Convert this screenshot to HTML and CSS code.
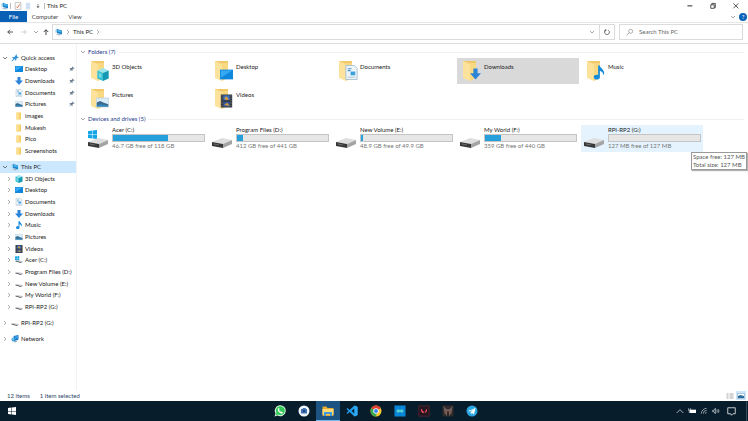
FILE: index.html
```html
<!DOCTYPE html>
<html lang="en">

<head>
    <meta charset="UTF-8">
    <meta name="viewport" content="width=device-width, initial-scale=1.0">
    <title>This PC</title>
    <link rel="stylesheet" href="styles.css">
</head>

<body>
    <!-- icon sprite -->
    <svg class="sprite" aria-hidden="true">
        <symbol id="pc" viewBox="0 0 16 16">
            <path d="M1 3l4-2v7l-4 2z" fill="#9ccbe6"/>
            <path d="M4 2l10 3v8L4 10z" fill="#1683cf"/>
            <path d="M5 3l8 3v3L5 7z" fill="#4db4ec"/>
            <path d="M1 12l6-1 6 3-5 1z" fill="#a9bac6"/>
        </symbol>
        <symbol id="chev-r" viewBox="0 0 8 8"><path d="M2 0l4 4-4 4" fill="none" stroke="currentColor" stroke-width="1.2"/></symbol>
        <symbol id="chev-d" viewBox="0 0 8 8"><path d="M0 2l4 4 4-4" fill="none" stroke="currentColor" stroke-width="1.3"/></symbol>
        <symbol id="arrow" viewBox="0 0 8 8"><path d="M8 4H1M4 1L1 4l3 3" fill="none" stroke="currentColor" stroke-width="1"/></symbol>
        <symbol id="arrow-up" viewBox="0 0 8 8"><path d="M4 8V1M1 4l3-3 3 3" fill="none" stroke="currentColor" stroke-width="1.1"/></symbol>
        <symbol id="star" viewBox="0 0 16 16"><path d="M11 0l1 5 4 2-5 2-1 5-3-4-5 5-1-1 4-5-4-2 6-1z" fill="#2f92dd"/></symbol>
        <symbol id="pin" viewBox="0 0 12 12"><path d="M7 1l4 4-1 1-1-1-2 2 0 3-1 0-2-2-3 3 0-1 2-3-2-2 1-1 3 0 2-2-1-1z" fill="#6d7f91"/></symbol>
        <symbol id="desktop" viewBox="0 0 16 16">
            <path d="M0 2h16v12H0z" fill="#0f87dc"/>
            <path d="M1 3h14L1 12z" fill="#35a9f4"/>
        </symbol>
        <symbol id="download" viewBox="0 0 16 16"><path d="M5 0h6v7h5l-8 9-8-9h5z" fill="#2c84d8"/></symbol>
        <symbol id="document" viewBox="0 0 16 16">
            <path d="M2 .5h9l3 3v12H2z" fill="#edf5fa" stroke="#a9bfce"/>
            <path d="M4 4h4M4 6h3" stroke="#4a93c9" stroke-width="1.2"/>
            <path d="M7 7h5v4H7z" fill="#3fa0dd"/>
            <path d="M4 13h8" stroke="#a5c0d2"/>
        </symbol>
        <symbol id="picture" viewBox="0 0 16 16">
            <path d="M.5 2.5h15v11H.5z" fill="#d9edf9" stroke="#c0d0db"/>
            <path d="M1 8l4-2 4 2 6 2v3H1z" fill="#3c698c"/>
            <path d="M1 11l6-1 8 2v1H1z" fill="#2e88bf"/>
        </symbol>
        <symbol id="video" viewBox="0 0 16 16">
            <path d="M1 0h14v16H1z" fill="#33363f"/>
            <path d="M4 1h8v6H4z" fill="#3c6fbd"/>
            <path d="M4 9h8v6H4z" fill="#375992"/>
            <path d="M5 5l3-3 3 4-3 1zM5 13l4-3 3 4z" fill="#cf9c43"/>
            <path d="M2.500 1v14M13.500 1v14" stroke="#868c96" stroke-dasharray="1.500 1.500"/>
        </symbol>
        <symbol id="music" viewBox="0 0 16 16">
            <path d="M7 0h2c0 3 5 4 5 9l-1 2c0-3-2-4-4-5v7c0 4-7 4-7 0 0-2 3-3 5-2z" fill="#148cdd"/>
        </symbol>
        <symbol id="cube" viewBox="0 0 16 16">
            <path d="M1 3l7-3 7 3-7 3z" fill="#9be6ee"/>
            <path d="M1 3l7 3v10l-7-3z" fill="#38bfd2"/>
            <path d="M15 3L8 6v10l7-3z" fill="#1598b4"/>
            <path d="M3 6l3 1v5l-3-1z" fill="#79dbe5"/>
        </symbol>
        <symbol id="folder-sm" viewBox="0 0 16 16">
            <path d="M3 1h9v14H3z" fill="#f4cc62"/>
            <path d="M3 1l6 2v12H3z" fill="#fbdf8c"/>
        </symbol>
        <symbol id="folder" viewBox="0 0 20 22">
            <path d="M1 1h13v17H4z" fill="#f0c868"/>
            <path d="M1 1l7 3v17l-7-3z" fill="#fce29a"/>
            <path d="M8 3h6v15l-6 3z" fill="#f8d880"/>
        </symbol>
        <symbol id="drive" viewBox="0 0 22 12">
            <path d="M1 6L11 2l10 2-9 4z" fill="#dedede"/>
            <path d="M1 6l11 2v4L1 10z" fill="#383838"/>
            <path d="M12 8l9-4v4l-9 4z" fill="#a4a4a4"/>
            <path d="M3 8l5 1" stroke="#6c6c6c"/>
        </symbol>
        <symbol id="drive-sm" viewBox="0 0 16 16">
            <path d="M1 9l5-1 9 2-3 2z" fill="#d3d6d8"/>
            <path d="M1 9l11 3v2L1 11z" fill="#5b5f64"/>
            <path d="M12 12l3-2v2l-3 2z" fill="#8a8e92"/>
        </symbol>
        <symbol id="winflag" viewBox="0 0 16 16">
            <path d="M0 2l7-1v7H0zM8 1l8-1v8H8zM0 9h7v6l-7-1zM8 9h8v7l-8-1z" fill="currentColor"/>
        </symbol>
        <symbol id="network" viewBox="0 0 16 16">
            <path d="M5 2l10-2v9l-8 3z" fill="#1676c4"/>
            <path d="M7 3l7-2v5l-6 2z" fill="#3a9de2"/>
            <circle cx="5" cy="9" r="4" fill="#2b8fd0"/>
            <path d="M2 8l3-2 2 2-3 4z" fill="#7cc8ee"/>
            <path d="M7 12l6-1-2 3-5 1z" fill="#82a6bb"/>
        </symbol>
    </svg>

    <header>
        <div class="titlebar">
            <svg class="i8"><use href="#pc"/></svg>
            <span class="sep"></span>
            <button class="quick" aria-label="Properties"><svg viewBox="0 0 12 14"><path d="M1 1h10v12H1z" fill="#fff" stroke="#9b9b9b"/><path d="M3 8l2 2 4-6" fill="none" stroke="#d9572b" stroke-width="1.500"/></svg></button>
            <button class="quick" aria-label="New folder"><svg viewBox="0 0 12 14"><path d="M2 1h8v12H2z" fill="#dceaf7"/><path d="M3 4h6M3 7h6M3 10h6" stroke="#b2cde7"/></svg></button>
            <button class="quick" aria-label="Customize toolbar"><svg viewBox="0 0 12 14"><path d="M4 5h4M4 8h4l-2 2z" stroke="#555" fill="#555"/></svg></button>
            <span class="sep"></span>
            <h1>This PC</h1>
            <div class="window-buttons">
                <button aria-label="Minimize"><svg viewBox="0 0 10 10"><path d="M2 5.500h7" stroke="#333" stroke-width="1.500"/></svg></button>
                <button aria-label="Restore"><svg viewBox="0 0 10 10"><path d="M2.500 4h5v5h-5zM4 4V2h5v6H8" fill="none" stroke="#333" stroke-width="1.200"/></svg></button>
                <button aria-label="Close"><svg viewBox="0 0 10 10"><path d="M2 2l7 7M9 2L2 9" stroke="#333" stroke-width="1.200"/></svg></button>
            </div>
        </div>
        <div class="ribbon">
            <button class="file">File</button>
            <button>Computer</button>
            <button>View</button>
            <div class="ribbon-end">
                <button class="expand" aria-label="Expand ribbon"><svg class="i4"><use href="#chev-d"/></svg></button>
                <button class="help" aria-label="Help">?</button>
            </div>
        </div>
        <nav class="navbar">
            <button aria-label="Back"><svg class="i6"><use href="#arrow"/></svg></button>
            <button class="forward" aria-label="Forward"><svg class="i6"><use href="#arrow"/></svg></button>
            <button class="recent" aria-label="Recent"><svg class="i4"><use href="#chev-d"/></svg></button>
            <button class="up" aria-label="Up"><svg class="i6"><use href="#arrow-up"/></svg></button>
            <div class="address">
                <svg class="i8"><use href="#pc"/></svg>
                <svg class="i4"><use href="#chev-r"/></svg>
                <a href="#">This PC</a>
                <svg class="i4"><use href="#chev-r"/></svg>
                <button class="drop" aria-label="Previous locations"><svg class="i4"><use href="#chev-d"/></svg></button>
                <button class="refresh" aria-label="Refresh"><svg class="i6" viewBox="0 0 10 10"><path d="M7 2a4 4 0 1 1-4 0M3 0v3H0" fill="none" stroke="#444" stroke-width="1.200"/></svg></button>
            </div>
            <label class="search">
                <svg class="i8" viewBox="0 0 12 12"><circle cx="7" cy="5" r="3" fill="none" stroke="#888"/><path d="M5 7l-4 4" stroke="#888"/></svg>
                <input type="search" placeholder="Search This PC" aria-label="Search This PC">
            </label>
        </nav>
    </header>

    <div class="content">
        <aside>
            <ul class="quick-access">
                <li class="root"><svg class="i4 open"><use href="#chev-d"/></svg><svg class="i8"><use href="#star"/></svg><a href="#">Quick access</a></li>
                <li><svg class="i8"><use href="#desktop"/></svg><a href="#">Desktop</a><svg class="pin"><use href="#pin"/></svg></li>
                <li><svg class="i8"><use href="#download"/></svg><a href="#">Downloads</a><svg class="pin"><use href="#pin"/></svg></li>
                <li><svg class="i8"><use href="#document"/></svg><a href="#">Documents</a><svg class="pin"><use href="#pin"/></svg></li>
                <li><svg class="i8"><use href="#picture"/></svg><a href="#">Pictures</a><svg class="pin"><use href="#pin"/></svg></li>
                <li><svg class="i8"><use href="#folder-sm"/></svg><a href="#">images</a></li>
                <li><svg class="i8"><use href="#folder-sm"/></svg><a href="#">Mukesh</a></li>
                <li><svg class="i8"><use href="#folder-sm"/></svg><a href="#">Pico</a></li>
                <li><svg class="i8"><use href="#folder-sm"/></svg><a href="#">Screenshots</a></li>
            </ul>
            <ul class="this-pc">
                <li class="root active"><svg class="i4 open"><use href="#chev-d"/></svg><svg class="i8"><use href="#pc"/></svg><a href="#">This PC</a></li>
                <li><svg class="i4"><use href="#chev-r"/></svg><svg class="i8"><use href="#cube"/></svg><a href="#">3D Objects</a></li>
                <li><svg class="i4"><use href="#chev-r"/></svg><svg class="i8"><use href="#desktop"/></svg><a href="#">Desktop</a></li>
                <li><svg class="i4"><use href="#chev-r"/></svg><svg class="i8"><use href="#document"/></svg><a href="#">Documents</a></li>
                <li><svg class="i4"><use href="#chev-r"/></svg><svg class="i8"><use href="#download"/></svg><a href="#">Downloads</a></li>
                <li><svg class="i4"><use href="#chev-r"/></svg><svg class="i8"><use href="#music"/></svg><a href="#">Music</a></li>
                <li><svg class="i4"><use href="#chev-r"/></svg><svg class="i8"><use href="#picture"/></svg><a href="#">Pictures</a></li>
                <li><svg class="i4"><use href="#chev-r"/></svg><svg class="i8"><use href="#video"/></svg><a href="#">Videos</a></li>
                <li><svg class="i4"><use href="#chev-r"/></svg><svg class="i8 blue" viewBox="0 0 16 16"><use href="#drive-sm"/><use href="#winflag" width="9" height="9"/></svg><a href="#">Acer (C:)</a></li>
                <li><svg class="i4"><use href="#chev-r"/></svg><svg class="i8"><use href="#drive-sm"/></svg><a href="#">Program Files (D:)</a></li>
                <li><svg class="i4"><use href="#chev-r"/></svg><svg class="i8"><use href="#drive-sm"/></svg><a href="#">New Volume (E:)</a></li>
                <li><svg class="i4"><use href="#chev-r"/></svg><svg class="i8"><use href="#drive-sm"/></svg><a href="#">My World (F:)</a></li>
                <li><svg class="i4"><use href="#chev-r"/></svg><svg class="i8"><use href="#drive-sm"/></svg><a href="#">RPI-RP2 (G:)</a></li>
            </ul>
            <ul>
                <li class="root"><svg class="i4"><use href="#chev-r"/></svg><svg class="i8"><use href="#drive-sm"/></svg><a href="#">RPI-RP2 (G:)</a></li>
            </ul>
            <ul>
                <li class="root"><svg class="i4"><use href="#chev-r"/></svg><svg class="i8"><use href="#network"/></svg><a href="#">Network</a></li>
            </ul>
        </aside>

        <main>
            <h2><svg class="i4"><use href="#chev-d"/></svg>Folders (7)</h2>
            <div class="tiles">
                <a class="tile" href="#"><svg class="thumb" viewBox="0 0 20 22"><use href="#folder"/><use href="#cube" x="6" y="8" width="14" height="13"/></svg><span>3D Objects</span></a>
                <a class="tile" href="#"><svg class="thumb" viewBox="0 0 20 22"><use href="#folder"/><use href="#desktop" x="6" y="8" width="13" height="13"/></svg><span>Desktop</span></a>
                <a class="tile" href="#"><svg class="thumb" viewBox="0 0 20 22"><use href="#folder"/><use href="#document" x="6" y="5" width="15" height="15"/></svg><span>Documents</span></a>
                <a class="tile selected" href="#"><svg class="thumb" viewBox="0 0 20 22"><use href="#folder"/><use href="#download" x="8" y="8" width="11" height="12"/></svg><span>Downloads</span></a>
                <a class="tile" href="#"><svg class="thumb" viewBox="0 0 20 22"><use href="#folder"/><use href="#music" x="6" y="4" width="14" height="17"/></svg><span>Music</span></a>
                <a class="tile" href="#"><svg class="thumb" viewBox="0 0 20 22"><use href="#folder"/><use href="#picture" x="6" y="8" width="13" height="13"/></svg><span>Pictures</span></a>
                <a class="tile" href="#"><svg class="thumb" viewBox="0 0 20 22"><use href="#folder"/><use href="#video" x="6" y="6" width="13" height="14"/></svg><span>Videos</span></a>
            </div>

            <h2><svg class="i4"><use href="#chev-d"/></svg>Devices and drives (5)</h2>
            <div class="tiles">
                <a class="tile drive" href="#"><svg class="thumb blue" viewBox="0 0 22 22"><use href="#winflag" x="1" y="4" width="9" height="9"/><use href="#drive" y="10" width="22" height="12"/></svg>
                    <div class="info"><span>Acer (C:)</span><div class="bar"><div style="width: 60%"></div></div><small>46.7 GB free of 118 GB</small></div></a>
                <a class="tile drive" href="#"><svg class="thumb" viewBox="0 0 22 22"><use href="#drive" y="10" width="22" height="12"/></svg>
                    <div class="info"><span>Program Files (D:)</span><div class="bar"><div style="width: 7%"></div></div><small>412 GB free of 441 GB</small></div></a>
                <a class="tile drive" href="#"><svg class="thumb" viewBox="0 0 22 22"><use href="#drive" y="10" width="22" height="12"/></svg>
                    <div class="info"><span>New Volume (E:)</span><div class="bar"><div style="width: 2%"></div></div><small>48.9 GB free of 49.9 GB</small></div></a>
                <a class="tile drive" href="#"><svg class="thumb" viewBox="0 0 22 22"><use href="#drive" y="10" width="22" height="12"/></svg>
                    <div class="info"><span>My World (F:)</span><div class="bar"><div style="width: 18%"></div></div><small>359 GB free of 440 GB</small></div></a>
                <a class="tile drive hovered" href="#"><svg class="thumb" viewBox="0 0 22 22"><use href="#drive" y="10" width="22" height="12"/></svg>
                    <div class="info"><span>RPI-RP2 (G:)</span><div class="bar"><div style="width: 0%"></div></div><small>127 MB free of 127 MB</small></div>
                    <div class="tooltip" role="tooltip">Space free: 127 MB<br>Total size: 127 MB</div></a>
            </div>
        </main>
    </div>

    <footer class="status">
        <span>12 items</span>
        <span>1 item selected</span>
        <div class="views">
            <button aria-label="Details view"><svg viewBox="0 0 16 12"><path d="M1 2h4M1 6h4M1 10h4M7 2h8M7 6h8M7 10h8" stroke="#8d8d8d" stroke-width="1.500"/></svg></button>
            <button class="on" aria-label="Large icons view"><svg viewBox="0 0 16 12"><path d="M1 1h14v10H1z" fill="#fff" stroke="#7795aa"/><path d="M2 6l5-2 7 2v4H2z" fill="#2b6d9c"/></svg></button>
        </div>
    </footer>

    <div class="taskbar">
        <button class="start" aria-label="Start"><svg viewBox="0 0 16 16"><use href="#winflag"/></svg></button>
        <div class="apps">
            <button aria-label="WhatsApp"><svg viewBox="0 0 24 24"><path d="M1 23l2-6a11 11 0 1 1 4 4z" fill="#d9f7e0"/><path d="M3 21l2-5a9 9 0 1 1 3 3z" fill="#36c75a"/><path d="M8 7l2-1 1 3-1 2 4 3 1-1 3 2c-1 3-4 3-7 0-3-2-4-5-3-8z" fill="#fff"/></svg></button>
            <button aria-label="Camera"><svg viewBox="0 0 24 24"><circle cx="12" cy="12" r="11" fill="#f3f6f9"/><path d="M6 8h3l1-2h5l1 2h2v9H6z" fill="#3d70b2"/><circle cx="12" cy="12" r="2" fill="#183b68"/></svg></button>
            <button class="running" aria-label="File Explorer"><svg viewBox="0 0 24 24"><path d="M1 3h8l2 3h12v16H1z" fill="#e6aa35"/><path d="M1 8h22v11H1z" fill="#ffdc78"/><path d="M4 14h16v8h-4v-4H8v4H4z" fill="#3d98dc"/></svg></button>
            <button aria-label="Visual Studio Code"><svg viewBox="0 0 24 24"><path d="M17 1l6 3v16l-6 3L7 14l-4 4-2-2 4-4-4-4 2-2 4 4zM17 7l-6 5 6 5z" fill="#229cec" fill-rule="evenodd"/><path d="M17 1l6 3v16l-6 3z" fill="#2fabf5"/></svg></button>
            <button aria-label="Chrome"><svg viewBox="0 0 24 24"><circle cx="12" cy="12" r="11" fill="#fbc72f"/><path d="M12 12L2.500 6.500a11 11 0 0 1 19 0z" fill="#e34133"/><path d="M2.500 6.500A11 11 0 0 0 11 23l4-8-3-3z" fill="#35a853"/><circle cx="12" cy="12" r="5.500" fill="#fff"/><circle cx="12" cy="12" r="4" fill="#3d82ef"/></svg></button>
            <button aria-label="Arduino"><svg viewBox="0 0 24 24"><path d="M1 1h22v22H1z" fill="#0a86d8"/><path d="M12 12c-3-4-6-2-6 0s3 4 6 0c3-4 6-2 6 0s-3 4-6 0z" fill="#47c9bd" stroke="#7fe8d6" stroke-width="1.500"/></svg></button>
            <button aria-label="Valorant"><svg viewBox="0 0 24 24"><path d="M1.500 1.500h21v21h-21z" fill="#251722" stroke="#7c2835"/><path d="M6 7l7 9h-4l-3-4zM18 7v5l-2 3h-3z" fill="#f34d5d"/></svg></button>
            <button aria-label="Predator"><svg viewBox="0 0 24 24"><path d="M1 1h22v22H1z" fill="#332b2b"/><path d="M3 2l4 5 5 2 5-2 4-5-2 14-5 6v-9h-4v9l-5-6z" fill="#6d6461"/><path d="M6 11l5 2-3 2zM18 11l-5 2 3 2z" fill="#a9422d"/></svg></button>
            <button aria-label="Telegram"><svg viewBox="0 0 24 24"><circle cx="12" cy="12" r="11" fill="#2ba5df"/><path d="M4 12l15-6-3 13-4-3-2 2-1-4 7-6-9 5z" fill="#fff"/></svg></button>
        </div>
        <div class="tray">
            <button aria-label="Show hidden icons"><svg viewBox="0 0 12 12"><path d="M1 9l5-5 5 5" fill="none" stroke="#fff"/></svg></button>
            <button aria-label="Battery"><svg viewBox="0 0 12 12"><path d="M3 4h9v5H3z" fill="#fff"/><path d="M1 2v3h3V2M2 5v4" stroke="#fff" fill="none"/></svg></button>
            <button aria-label="Wi-Fi"><svg viewBox="0 0 12 12"><path d="M2 10a8 8 0 0 1 8-8M5 10a5 5 0 0 1 5-5M8 10a2 2 0 0 1 2-2" fill="none" stroke="#ced5da"/></svg></button>
            <button aria-label="Volume"><svg viewBox="0 0 12 12"><path d="M1 5h2l2-3v8L3 7H1zM7 4q2 2 0 4M9 3q3 3 0 6" fill="none" stroke="#dfe4e8"/></svg></button>
            <button class="notify" aria-label="Notifications"><svg viewBox="0 0 12 12"><path d="M1 1h10v8H8l-2 2-1-2H1z" fill="none" stroke="#fff"/></svg></button>
        </div>
    </div>
</body>

</html>
```

FILE: styles.css
```css
* {
    box-sizing: border-box;
}

body {
    font-family: Lato, 'Open Sans', sans-serif;
    font-size: 6px;
    line-height: 8px;
    color: #222;
    background-color: #fff;
    display: flex;
    flex-direction: column;
    min-height: 100vh;
    margin: 0;
}

.sprite {
    display: none;
}

svg {
    display: block;
    flex: none;
}

button {
    font: inherit;
    color: inherit;
    background: none;
    border: none;
    padding: 0;
    display: flex;
    align-items: center;
    justify-content: center;
}

a {
    color: inherit;
    text-decoration: none;
}

h1, h2 {
    font-size: 6px;
    font-weight: normal;
    margin: 0;
}

.i4 {
    width: 4px;
    height: 4px;
    color: #777;
}

.i6 {
    width: 6px;
    height: 6px;
}

.i8 {
    width: 8px;
    height: 8px;
}

.blue {
    color: #12a5e8;
}

/* title bar */
.titlebar {
    display: flex;
    align-items: center;
    height: 11px;
    padding-left: 1px;
}

.titlebar .sep {
    width: 1px;
    height: 6px;
    margin: 0 2px 0 1px;
    background-color: #bbb;
}

.quick {
    width: 10px;
}

.quick svg {
    width: 8px;
    height: 8px;
}

.window-buttons {
    display: flex;
    margin-left: auto;
    padding-right: 1px;
}

.window-buttons button {
    width: 23px;
    height: 11px;
}

.window-buttons svg {
    width: 7px;
    height: 7px;
}

/* ribbon */
.ribbon {
    display: flex;
    height: 12px;
    border-bottom: 1px solid #e6e6e6;
}

.ribbon > button {
    width: 30px;
    color: #444;
}

.ribbon > .file {
    width: 27px;
    margin-right: 3px;
    color: #fff;
    background-color: #0a60b4;
}

.ribbon-end {
    display: flex;
    align-items: center;
    gap: 4px;
    margin-left: auto;
    padding-right: 1px;
}

.help {
    width: 8px;
    height: 8px;
    border-radius: 50%;
    color: #fff;
    background-color: #0a63b8;
}

/* navigation row */
.navbar {
    display: flex;
    align-items: center;
    height: 21px;
    padding: 0 5px 2px 3px;
    border-bottom: 1px solid #dedede;
}

.navbar > button {
    width: 14px;
}

.navbar .forward {
    color: #c4c4c4;
}

.forward svg {
    transform: rotate(180deg);
}

.navbar > .recent {
    width: 10px;
}

.navbar > .up {
    width: 10px;
    margin-right: 1px;
}

.address {
    display: flex;
    flex: 1;
    align-items: center;
    gap: 3px;
    height: 16px;
    padding-left: 2px;
    border: 1px solid #dcdcdc;
}

.drop {
    width: 12px;
    margin-left: auto;
}

.refresh {
    width: 15px;
    height: 14px;
    margin-left: -2px;
    border-left: 1px solid #dcdcdc;
}

.search {
    display: flex;
    align-items: center;
    gap: 5px;
    width: 124px;
    height: 16px;
    margin-left: 4px;
    padding-left: 6px;
    border: 1px solid #dcdcdc;
}

.search input {
    flex: 1;
    min-width: 0;
    padding: 0;
    border: none;
    outline: none;
    font: inherit;
    background: none;
}

.search input::placeholder {
    color: #666;
}

/* sidebar */
.content {
    display: flex;
    flex: 1;
}

aside {
    width: 77px;
    padding: 8px 0 0;
    border-right: 1px solid #f2f2f2;
}

aside ul {
    display: grid;
    grid-auto-rows: 1fr;
    min-height: 12px;
    margin: 0 0 4px;
    padding: 0;
    list-style: none;
}

aside .quick-access {
    min-height: 105px;
}

aside .this-pc {
    min-height: 152px;
}

aside li {
    display: flex;
    align-items: center;
    gap: 2px;
    padding-left: 15px;
    white-space: nowrap;
}

aside li .i4 {
    margin: 0 2px 0 -8px;
}

aside li.root {
    padding-left: 11px;
}

aside .open {
    color: #333;
}

aside .active {
    background-color: #cce8ff;
}

.pin {
    width: 6px;
    height: 6px;
    margin: 0 1px 0 auto;
}

/* main area */
main {
    flex: 1;
    padding: 4px 4px 0;
}

h2 {
    display: flex;
    align-items: center;
    gap: 3px;
    color: #1e3c8c;
}

h2::after {
    content: '';
    flex: 1;
    height: 1px;
    background-color: #f0f0f0;
}

.tiles {
    display: grid;
    grid-template-columns: repeat(auto-fill, 122px);
    gap: 2px;
    padding: 2px 0 3px 4px;
}

.tile {
    display: flex;
    gap: 1px;
    height: 26px;
    padding: 2px 2px 0 4px;
    white-space: nowrap;
}

.tile > span {
    padding-top: 3px;
}

.thumb {
    width: 22px;
    height: 22px;
}

.drive {
    position: relative;
    height: 27px;
    gap: 3px;
    padding: 1px 2px 0;
}

.selected {
    background-color: #d9d9d9;
}

.hovered {
    background-color: #e5f3ff;
}

.info {
    flex: 1;
}

.info span, .info small {
    display: block;
    font-size: 6px;
}

.info small {
    color: #777;
}

.bar {
    height: 8px;
    border: 1px solid #c4c4c4;
    background-color: #e6e6e6;
}

.bar div {
    height: 100%;
    background-color: #26a0da;
}

.tooltip {
    position: absolute;
    top: 27px;
    right: -44px;
    padding: 0 1px;
    border: 1px solid #999;
    color: #575757;
    background-color: #fff;
    box-shadow: 1px 1px 1px rgba(0, 0, 0, 0.3);
}

/* status bar */
.status {
    display: flex;
    align-items: center;
    gap: 10px;
    height: 11px;
    padding-left: 7px;
    color: #2c4568;
}

.views {
    display: flex;
    gap: 1px;
    margin-left: auto;
    padding-right: 2px;
}

.views button {
    width: 10px;
    height: 9px;
}

.views svg {
    width: 8px;
    height: 6px;
}

.views .on {
    background-color: #cce8ff;
}

/* taskbar */
.taskbar {
    display: grid;
    grid-template-columns: 1fr auto 1fr;
    height: 20px;
    padding-left: 4px;
    color: #fff;
    background-color: #071d2b;
}

.start {
    width: 16px;
}

.start svg {
    width: 8px;
    height: 8px;
}

.apps, .tray {
    display: flex;
}

.apps button {
    width: 24px;
}

.apps svg {
    width: 12px;
    height: 12px;
}

.apps .running {
    background-color: #1d5382;
    border-bottom: 1px solid #76b9ed;
}

.tray {
    justify-content: flex-end;
    margin-right: 1px;
    border-right: 1px solid #36495a;
}

.tray button {
    width: 12px;
}

.tray svg {
    width: 8px;
    height: 8px;
}

.tray .notify {
    width: 20px;
    padding-right: 2px;
    margin-right: 4px;
}

.notify svg {
    width: 9px;
    height: 9px;
}
```
